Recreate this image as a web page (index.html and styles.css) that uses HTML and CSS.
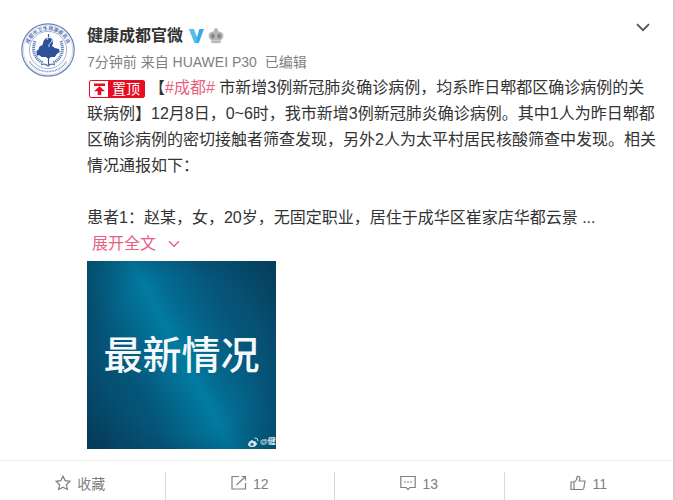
FILE: index.html
```
<!DOCTYPE html>
<html lang="zh-CN">
<head>
  <meta charset="UTF-8" />
  <meta name="viewport" content="width=device-width, initial-scale=1" />
  <title>健康成都官微</title>
  <link rel="stylesheet" href="styles.css">
</head>
<body>
  <article class="card">
    <div class="feed">
      <svg class="avatar" viewBox="0 0 54 54" role="img" aria-label="健康成都官微">
        <defs>
          <path id="ringTop" d="M8.2 34 A20 20 0 1 1 45.8 34" />
        </defs>
        <circle cx="27" cy="27" r="26.2" fill="#fff" stroke="#6a84b8" stroke-width="1.200" />
        <circle cx="27" cy="27" r="24.7" fill="none" stroke="#b3c1dd" stroke-width=".6" />
        <circle cx="27" cy="27" r="18.6" fill="none" stroke="#7f96c4" stroke-width=".7" />
        <text class="ring-text"><textPath href="#ringTop" startOffset="50%" text-anchor="middle">成都市卫生健康委员会</textPath></text>
        <path d="M8.500 38.500 A22 22 0 0 0 45.500 38.500" fill="none" stroke="#8299c5" stroke-width="1.600" stroke-dasharray="1 .6" />
        <g fill="none" stroke="#6b86bb" stroke-width="3" stroke-dasharray="1.300 .7">
          <path d="M14 18 Q9 33 22 40" />
          <path d="M40 18 Q45 33 32 40" />
        </g>
        <path d="M15.500 28l2-1.500 1-3 3-1.500 1-4 2-2.500 4-1 3 2 .5 4-1 2.500 3 2 4 1 .8 3-3 2-2 3-4 0-2 2-3-2-4 0-3-2-2 1z" fill="#2d5299" />
        <path d="M27.500 11v31" fill="none" stroke="#2d5299" stroke-width="1.200" />
        <path d="M26 17q1-4 4-3 3 2 0 5.500-3 2-2 4.500" fill="none" stroke="#dce5f5" stroke-width="1" />
        <path d="M20 42q4-2 7 1q3-3 7-1" fill="none" stroke="#5674ae" stroke-width="1.200" />
      </svg>

      <div class="main">
        <header class="head">
          <h1 class="name">健康成都官微</h1>
          <svg class="verified" viewBox="0 0 16 15" role="img" aria-label="认证">
            <path d="M0 0h5l3.500 9L11 0h5l-5.500 15H6z" fill="#38abe6" />
            <path d="M0 0h5l3.500 9L7.500 15H6z" fill="#55c0f0" />
          </svg>
          <svg class="crown" viewBox="0 0 16 16" role="img" aria-label="会员">
            <circle cx="8" cy="2" r="1.800" fill="#aaa" />
            <path d="M.5 7.500Q1 4 4.500 3.800 6 2.500 8 2.500t3.500 1.300Q15 4 15.500 7.500q0 3-2.500 4.500v2.500q-5 1.500-10 0V12Q.5 10.500.5 7.500z" fill="#b5b5b5" />
            <ellipse cx="4.800" cy="8.200" rx="1.900" ry="2.400" fill="#858585" />
            <ellipse cx="11.200" cy="8.200" rx="1.900" ry="2.400" fill="#858585" />
            <path d="M3.500 12.500q4.500 1 9 0" fill="none" stroke="#d8d8d8" />
          </svg>
          <button class="more" type="button" aria-label="更多">
            <svg width="14" height="9" viewBox="0 0 14 9"><path d="M1 1.200l6 6 6-6" fill="none" stroke="#555" stroke-width="1.800" /></svg>
          </button>
        </header>

        <p class="meta"><span>7分钟前 来自 HUAWEI P30</span><span>已编辑</span></p>

        <div class="text">
          <p><span class="pin"><svg class="pin-icon" viewBox="0 0 18 16"><path d="M4 2.500h11v2.400H4zM9.500 5.200l5.500 5h-3.700V14H7.700v-3.800H4z" fill="#e60d22" /></svg><span class="pin-label">置顶</span></span>【<a class="topic" href="#">#成都#</a> 市新增3例新冠肺炎确诊病例，均系昨日郫都区确诊病例的关联病例】12月8日，0~6时，我市新增3例新冠肺炎确诊病例。其中1人为昨日郫都区确诊病例的密切接触者筛查发现，另外2人为太平村居民核酸筛查中发现。相关情况通报如下：</p>
          <p class="patient">患者1：赵某，女，20岁，无固定职业，居住于成华区崔家店华都云景 ...</p>
        </div>
        <a class="expand" href="#">展开全文
          <svg width="12" height="8" viewBox="0 0 12 8"><path d="M1 1.200l5 5 5-5" fill="none" stroke="#e8607f" stroke-width="1.400" /></svg>
        </a>

        <div class="photo">
          <span class="photo-title">最新情况</span>
          <span class="watermark">
            <svg width="12" height="11" viewBox="0 0 12 11">
              <path d="M5 3Q2 4 1 7q0 3 4 3t5-3q0-1.500-1.500-2 .5-1.500-2.500-.8Q6.200 2.500 5 3z" fill="#d5e4ec" />
              <circle cx="5" cy="7.300" r="1.500" fill="#1f6681" />
              <path d="M7.500 1q3.500-.5 3.500 3" fill="none" stroke="#d5e4ec" />
            </svg>
            <span>@健康</span>
          </span>
        </div>
      </div>
    </div>

    <footer class="actions">
      <button class="action" type="button">
        <svg width="16" height="16" viewBox="0 0 16 16"><path d="M8 1.200l2.100 4.400 4.800.7-3.500 3.400.9 4.800L8 12.200l-4.300 2.300.9-4.800L1.100 6.300l4.800-.7z" /></svg>
        收藏
      </button>
      <button class="action" type="button" aria-label="转发 12">
        <svg width="16" height="16" viewBox="0 0 16 16"><path d="M8 1.500H1v12.500h13.500V8M5.500 10L14.500 1.500M10.500 1.500h4V5.500" /></svg>
        12
      </button>
      <button class="action" type="button" aria-label="评论 13">
        <svg width="16" height="16" viewBox="0 0 16 16"><path d="M.8 1.500h14.400v11H10L8 14.500l-2-2H.8z" /><path d="M4 7h2M7 7h2M10 7h2" /></svg>
        13
      </button>
      <button class="action" type="button" aria-label="赞 11">
        <svg width="16" height="16" viewBox="0 0 16 16"><path d="M4 7H1v7.500h3zM4 7q3-1.500 3.200-5.500Q9.800.5 9.800 3.500L9.200 6H15l-1.200 7.200q-.3 1.300-1.500 1.300H4" /></svg>
        11
      </button>
    </footer>
  </article>
</body>
</html>
```

FILE: styles.css
```
*, *::before, *::after {
  box-sizing: border-box;
}

body {
  margin: 0;
  background: #fff;
  font-family: "Liberation Sans", "Noto Sans CJK SC", sans-serif;
  color: #333;
}

h1, p {
  margin: 0;
}

a {
  text-decoration: none;
}

button {
  font: inherit;
  border: 0;
  background: none;
  padding: 0;
  cursor: pointer;
}

.card {
  display: flex;
  flex-direction: column;
  min-height: 100vh;
  overflow: hidden;
  border-right: 2px solid #e8bfcc;
}

.feed {
  display: flex;
  gap: 12px;
  padding: 23px 15px 11px 21px;
}

.avatar {
  flex: none;
  width: 54px;
  height: 54px;
}

.ring-text {
  font-size: 5px;
  font-weight: 700;
  fill: #5f7bb3;
}

.main {
  flex: 1;
  min-width: 0;
}

.head {
  display: flex;
  align-items: center;
  height: 26px;
}

.name {
  font-size: 16px;
  font-weight: 700;
  line-height: 26px;
}

.verified {
  width: 15px;
  height: 14px;
  margin-left: 6px;
}

.crown {
  width: 16px;
  height: 16px;
  margin-left: 4px;
}

.more {
  display: flex;
  align-self: flex-start;
  margin-left: auto;
  margin-right: 8px;
}

.meta {
  display: flex;
  gap: 8px;
  font-size: 14px;
  line-height: 26px;
  color: #808080;
}

.text {
  font-size: 16px;
  line-height: 26px;
}

.patient {
  margin-top: 26px;
}

.pin {
  display: inline-flex;
  height: 18px;
  margin: 0 4px 0 2px;
  border: 1px solid #e60d22;
  border-radius: 2px;
  vertical-align: middle;
}

.pin-icon {
  width: 18px;
  height: 16px;
}

.pin-label {
  width: 36px;
  background: #e60d22;
  color: #fff;
  font-size: 14px;
  line-height: 16px;
  text-align: center;
}

.topic, .expand {
  color: #e8607f;
}

.expand {
  display: flex;
  align-items: center;
  gap: 12px;
  width: max-content;
  margin-left: 5px;
  font-size: 16px;
  line-height: 26px;
}

.photo {
  position: relative;
  display: flex;
  align-items: center;
  justify-content: center;
  width: 189px;
  height: 188px;
  margin-top: 4px;
  padding-top: 2px;
  overflow: hidden;
  background:
    radial-gradient(circle at 50% 50%, transparent 60%, rgba(5, 40, 65, 0.35) 100%),
    linear-gradient(62deg, #064365 0%, #055578 28%, #027ba1 50%, #046a90 58%, #065579 74%, #064766 100%);
}

.photo-title {
  font-size: 39px;
  font-weight: 500;
  line-height: 48px;
  color: #f5f9fc;
}

.watermark {
  position: absolute;
  left: 160px;
  bottom: 1px;
  display: flex;
  align-items: center;
  gap: 1px;
  font-size: 8px;
  font-weight: 700;
  line-height: 12px;
  white-space: nowrap;
  color: #d5e4ec;
}

.actions {
  display: flex;
  flex: 1;
  margin-left: -4px;
  padding-top: 11px;
  border-top: 1px solid #f0f0f0;
}

.action {
  display: flex;
  flex: 1;
  align-items: flex-start;
  justify-content: center;
  gap: 6px;
  padding-top: 2px;
  font-size: 14px;
  line-height: 20px;
  color: #808080;
}

.action + .action {
  border-left: 1px solid #d9d9d9;
}

.action svg {
  margin-top: 1px;
  fill: none;
  stroke: #808080;
  stroke-width: 1.2;
}
```
